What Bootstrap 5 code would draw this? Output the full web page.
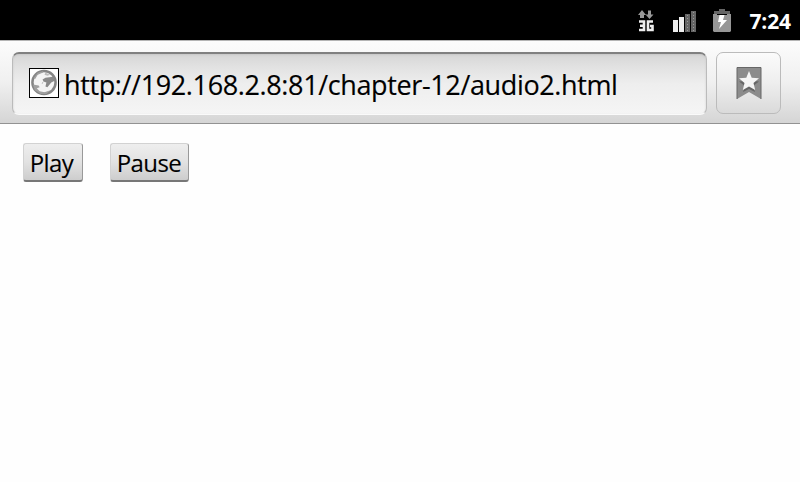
<!DOCTYPE html>
<html lang="en">
<head>
<meta charset="utf-8">
<meta name="viewport" content="width=device-width, initial-scale=1">
<title>Audio</title>
<link href="https://cdn.jsdelivr.net/npm/bootstrap@5.3.0/dist/css/bootstrap.min.css" rel="stylesheet">
<style>
body{font-family:"Open Sans","Noto Sans",sans-serif;background:#fefefe;color:#000;height:482px;overflow:hidden}
.statusbar{height:40px;padding:0 9px 0 0;background:#000}
.clock{font-size:21px;font-weight:700;line-height:40px;letter-spacing:-.1px;margin-left:17px;padding-top:1px}
.toolbar{height:84px;padding:11px 19px 9px 12px;gap:9px;border-top:1px solid #b4b4b4;border-bottom:1px solid #929292;background:linear-gradient(#fcfcfc,#f0f0f0 50%,#d5d5d5)}
.address{height:63px;width:695px;padding-left:16px;gap:5px;border:1px solid #bbb;border-top:2px solid #808080;border-bottom:1px solid #fafafa;border-radius:7px;background:linear-gradient(#d6d6d6,#e2e2e2 22%,#eee 50%,#f5f5f5);box-shadow:inset 0 1px 2px #c8c8c8}
.favicon{width:30px;height:30px;border:1px solid #000;background:#fff;margin-bottom:2px}
.url{font-size:27px;line-height:34px;white-space:nowrap;letter-spacing:-.37px;padding-top:1px;-webkit-text-stroke:.15px #000}
.bookmark{width:65px;height:62px;border:1px solid #bbb;border-radius:7px;background:linear-gradient(#fbfbfb,#eee 50%,#dadada)}
.page{padding:19px 23px;gap:27px}
.btn.control{height:39px;padding:2px 1px 0 0;border:1px solid #d2d2d2;border-right-color:#999;border-bottom:2px solid #777;border-radius:3px;background:linear-gradient(#eee,#e2e2e2 50%,#cdcdcd);font-size:24px;line-height:34px;color:#000;letter-spacing:-.6px;-webkit-text-stroke:.1px #000}
.play{width:60px}.btn.play{padding-right:3px}.pause{width:79px}
</style>
<script src="https://cdn.jsdelivr.net/npm/bootstrap@5.3.0/dist/js/bootstrap.bundle.min.js"></script>
</head>
<body>
<header>
<div class="statusbar d-flex justify-content-end align-items-center text-white">
<svg width="102" height="40" viewBox="630 0 102 40" aria-hidden="true">
<path fill="#999" d="M642 10l4 5h-2v3h-4v-3h-2zM649.5 19l-4-4.500h2.500v-4h3v4h2.500z"/>
<path fill="none" stroke="#eee" stroke-width="2.600" d="M639 21.500h5v8.500h-5M640 25.700h4M653 21.500h-5v8.500h4.500v-4h-2.500"/>
<path fill="#eee" d="M673 20h5v12h-5zM679 17h5v15h-5z"/>
<path fill="#656565" d="M685 14h5v18h-5zM691 11h5v21h-5z"/>
<path stroke="#999" stroke-dasharray="1 2" d="M687.500 15v16M693.500 12v19"/>
<path fill="#666" d="M719 9h6v2h5v3h-16v-3h5z"/>
<path fill="#969696" d="M713 14h4v1h10v-1h4v17l-1 1h-16l-1-1z"/>
<path fill="#fff" d="M719.500 15h5l-1.500 5h4l-8 9 2-7h-3z"/>
</svg>
<span class="clock">7:24</span>
</div>
<nav class="toolbar d-flex align-items-start">
<div class="address d-flex align-items-center">
<svg class="favicon flex-shrink-0" viewBox="0 0 29 29" aria-hidden="true">
<circle cx="14.500" cy="14" r="12" fill="#f4f4f4" stroke="#858585" stroke-width="2.600"/>
<path fill="#a0a0a0" d="M4 9l4-5 6-2-1 2-5 2-3 5zM3 16l6 1 1 2-3 1 3 3 5 1 6-2-4 4-6 0-6-4z"/>
<path fill="#8a8a8a" d="M12 15l2-2-1-2 3-2 8-1 2 4-4 2-4 5-2-1 1-4-3-1-1 2z"/>
<path fill="#bbb" d="M16 4l5 2-3 1-3-1z"/>
</svg>
<span class="url">http://192.168.2.8:81/chapter-12/audio2.html</span>
</div>
<div class="bookmark d-flex align-items-center justify-content-center" role="button" aria-label="Bookmarks">
<svg width="26" height="34" viewBox="0 0 26 34" aria-hidden="true">
<path fill="#8c8c8c" d="M1 1h24v32l-12-7-12 7z"/>
<path fill="none" stroke="#666" d="M1 33V1.500h24V33"/>
<path fill="#666" d="M13 8l3 7 7 .500-6 4.500 2 6-6-3-6 3 2-6-6-4.500 7-.500z"/>
<path fill="#f5f5f5" d="M13 5l2.700 6.700 7.300.600-5.500 4.700 1.700 7-6.200-3.500-6.200 3.500 1.700-7-5.500-4.700 7.300-.600z"/>
</svg>
</div>
</nav>
</header>
<main class="page d-flex">
<button class="btn control play" type="button">Play</button>
<button class="btn control pause" type="button">Pause</button>
</main>
</body>
</html>
